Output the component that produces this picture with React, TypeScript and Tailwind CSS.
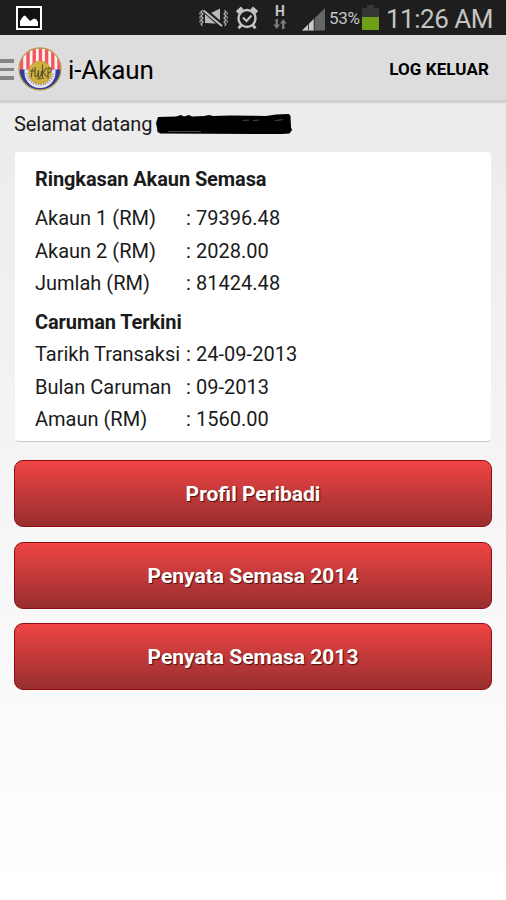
const summary = [
  { label: "Akaun 1 (RM)", value: "79396.48" },
  { label: "Akaun 2 (RM)", value: "2028.00" },
  { label: "Jumlah (RM)", value: "81424.48" },
];

const latest = [
  { label: "Tarikh Transaksi", value: "24-09-2013" },
  { label: "Bulan Caruman", value: "09-2013" },
  { label: "Amaun (RM)", value: "1560.00" },
];

const actions = ["Profil Peribadi", "Penyata Semasa 2014", "Penyata Semasa 2013"];

function GalleryIcon() {
  return (
    <svg width="26" height="24" viewBox="0 0 26 24" className="shrink-0">
      <rect x="1" y="1" width="24" height="22" fill="#111" stroke="#fff" strokeWidth="2" />
      <path d="M4 20v-5l2-3 2-2.500 1.500.5 4.500 5 4-2.500 2.500 1L22 16v4z" fill="#fff" />
    </svg>
  );
}

function MuteVibrateIcon() {
  return (
    <svg width="29" height="20" viewBox="0 0 29 20" fill="none" className="shrink-0">
      <path d="M6 5h6L21 .5v15H15L6 15z" fill="#b9b9b9" />
      <path d="M4.500 1.500l18.500 16" stroke="#1e1e1e" strokeWidth="5" />
      <path d="M4.500 2.500l18.500 15.500" stroke="#b9b9b9" strokeWidth="2.200" />
      <path
        d="M3.500 2l-1.500 2 2 2-2 2 2 2-2 2 2 2-2 2 1.500 2M1 4.500v2m0 2v2m0 2v2M25.500 2l1.500 2-2 2 2 2-2 2 2 2-2 2 2 2-1.500 2M28.200 4.500v2m0 2v2m0 2v2"
        stroke="#b9b9b9"
        strokeWidth="1.200"
      />
    </svg>
  );
}

function AlarmIcon() {
  return (
    <svg width="24" height="24" viewBox="0 0 24 24" fill="none" stroke="#c4c4c4" className="shrink-0">
      <circle cx="11" cy="12.500" r="8.500" strokeWidth="2.400" />
      <path d="M7 11.500l3.500 3.500 5-5.500" strokeWidth="2" />
      <path d="M1.200 6.500l5-4.700M20.800 6.500l-5-4.700" strokeWidth="3.800" />
      <path d="M5 19.500l-2.500 2.800M17 19.500l2.500 2.800" strokeWidth="2.800" />
    </svg>
  );
}

function DataIcon() {
  return (
    <div className="flex w-[14px] shrink-0 flex-col items-center">
      <span className="text-[14px] leading-[13px] font-bold text-[#c4c4c4]">H</span>
      <svg width="14" height="10" viewBox="0 0 14 10" fill="#7b7b7b" className="mt-px">
        <path d="M2.500 0h2.500v5.500h2.200L3.700 10 .2 5.500h2.300zM9 10V4.500H6.800L10.300 0l3.500 4.500h-2.300V10z" />
      </svg>
    </div>
  );
}

function SignalIcon() {
  return (
    <svg width="23" height="23" viewBox="0 0 23 23" className="shrink-0">
      <path d="M0 22.500L23 0v22.500z" fill="#656565" />
      <path d="M0 22.500l12-11.700v11.700z" fill="#c8c8c8" />
      <path d="M6.500 15v7.500M12.200 10v12.500" stroke="#1e1e1e" strokeWidth=".8" />
    </svg>
  );
}

function BatteryIcon() {
  return (
    <svg width="17" height="25" viewBox="0 0 17 25" className="shrink-0">
      <path d="M5 0h7v3h5v9H0V3h5z" fill="#363636" />
      <path d="M0 12h17v13H0z" fill="#6f9f14" />
    </svg>
  );
}

function Logo() {
  return (
    <svg width="44" height="44" viewBox="0 0 44 44" className="shrink-0">
      <defs>
        <clipPath id="disc">
          <circle cx="22" cy="22" r="21" />
        </clipPath>
      </defs>
      <g clipPath="url(#disc)">
        <rect width="44" height="44" fill="#fff4f2" />
        <path
          d="M3.500 0v24M10 0v24M16.200 0v24M22.400 0v24M28.600 0v24M34.800 0v24M41 0v24"
          stroke="#f2555d"
          strokeWidth="3.400"
        />
        <path d="M0 22.500h44v22H0z" fill="#303f9f" />
      </g>
      <path d="M6.500 22.500h31v3a15.500 15.500 0 0 1-31 0z" fill="#e9e9ef" />
      <path
        d="M8.500 26a13.600 13.600 0 0 0 27 0"
        fill="none"
        stroke="#8c8ca0"
        strokeWidth="1.800"
        strokeDasharray="1.100 1.400"
      />
      <circle cx="22" cy="25.500" r="11.500" fill="#cdb040" stroke="#c39a3a" strokeWidth=".7" />
      <g fill="none" stroke="#5d512b" strokeWidth="1.100">
        <path d="M12 24h6M14.500 21.500l-1.500 9M17 20v9c1 2 3 0 3.500-6v7c1 1 3-1 3-6v5M24.500 17.500v13M29 20.500l-4 5 4 4.500M30 32v-10c1.500-2 4-1 3 2-.5 1.500-2 2-3 1.500M19 32l7-1" />
      </g>
      <circle cx="22" cy="22" r="21" fill="none" stroke="#c09a4c" strokeWidth="1.300" />
    </svg>
  );
}

function Rows({ items }: { items: { label: string; value: string }[] }) {
  return (
    <dl>
      {items.map((item) => (
        <div key={item.label} className="flex h-[32.4px] items-center">
          <dt className="w-[151px] whitespace-nowrap">{item.label}</dt>
          <dd className="whitespace-pre tracking-[0.04px]">: {item.value}</dd>
        </div>
      ))}
    </dl>
  );
}

export default function App() {
  return (
    <div className="flex h-[900px] w-[506px] flex-col overflow-hidden bg-gradient-to-b from-[#e9e9e9] to-white font-['Roboto',sans-serif] text-[#1b1b1b]">
      {/* Status bar */}
      <div className="flex h-[35px] shrink-0 items-center bg-[#1e1e1e] pl-4 text-[#c4c4c4]">
        <GalleryIcon />
        <div className="ml-[157px] flex items-center">
          <MuteVibrateIcon />
          <div className="ml-[8px]">
            <AlarmIcon />
          </div>
          <div className="mb-px ml-[13px]">
            <DataIcon />
          </div>
          <div className="mt-[4px] ml-[15px]">
            <SignalIcon />
          </div>
        </div>
        <span className="mt-[2px] ml-[4px] w-[32px] text-[17px] tracking-[-0.3px] whitespace-nowrap">53%</span>
        <div className="ml-px">
          <BatteryIcon />
        </div>
        <span className="mt-[3px] ml-[7px] text-[26px] leading-8 tracking-[-0.5px] whitespace-nowrap">11:26 AM</span>
      </div>

      {/* Action bar */}
      <header className="flex h-[68px] shrink-0 items-center border-b-[3px] border-[#d0d0d0] bg-[#ddd] text-black">
        <div className="mt-[4px] flex w-[14px] shrink-0 flex-col gap-[5px]">
          <div className="h-[3.500px] bg-[#858585]" />
          <div className="h-[3.500px] bg-[#858585]" />
          <div className="h-[3.500px] bg-[#858585]" />
        </div>
        <div className="mt-[2px] ml-[4px]">
          <Logo />
        </div>
        <h1 className="mt-[5px] ml-[6px] text-[26px] tracking-[-0.1px] whitespace-nowrap">i-Akaun</h1>
        <button className="mt-[5px] mr-[17px] ml-auto text-[17px] font-bold tracking-[0.1px] whitespace-nowrap">LOG KELUAR</button>
      </header>

      {/* Welcome */}
      <div className="flex h-[49px] shrink-0 items-center pb-[7px] pl-[14px] text-[20px]">
        <span className="tracking-[-0.12px] whitespace-nowrap">Selamat datang</span>
        <svg width="136" height="22" viewBox="0 0 136 22" className="mt-[2px] ml-[4px] shrink-0">
          <path
            d="M2 3l18-.5 5-1.500 3 1.500 5-1.500 3 1.500 12-.5 5-1 4 1 17-.5 36 .5 10-1.500 13-.5 1.500 2 .5 11 1 3-2.500 3.500-8 .5-121-.5-3-1.500-.5-4-1-5z"
            fill="#000"
          />
          <path d="M12 17.500h33M87 6.500l6-.4M97 6.500l6-.4M119 6.500l8-.8" stroke="#777" strokeWidth=".6" />
        </svg>
      </div>

      <main className="flex flex-col px-[14px]">
        {/* Account summary */}
        <section className="mx-px h-[290px] rounded-[4px] border-b border-[#c9c9c9] bg-white pt-[11px] pl-5 text-[20px] leading-[32px]">
          <h2 className="mb-[7px] font-bold tracking-[-0.1px]">Ringkasan Akaun Semasa</h2>
          <Rows items={summary} />
          <h2 className="mt-[7px] font-bold tracking-[-0.1px]">Caruman Terkini</h2>
          <Rows items={latest} />
        </section>

        {/* Actions */}
        <div className="mt-[18px] flex flex-col gap-[14.500px]">
          {actions.map((label) => (
            <button
              key={label}
              className="h-[67px] rounded-[9px] border border-[#900c10] bg-gradient-to-b from-[#f04444] to-[#982e2e] pt-[3px] text-[21px] font-bold text-white shadow-[0_1px_0_#ffffff] [text-shadow:1px_1px_1px_#4b0d0d]"
            >
              {label}
            </button>
          ))}
        </div>
      </main>
    </div>
  );
}
